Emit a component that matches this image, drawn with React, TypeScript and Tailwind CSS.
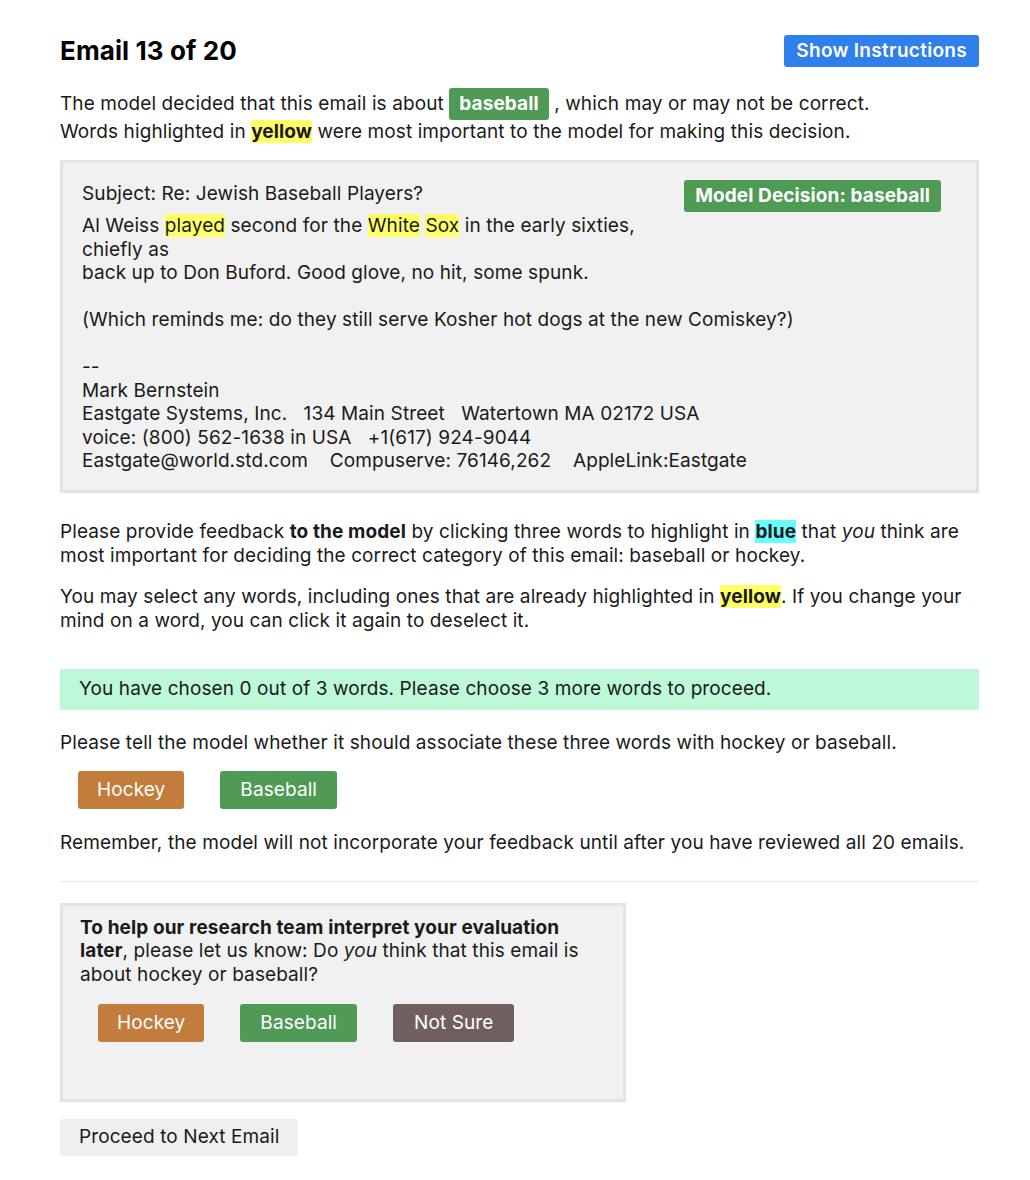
import { JSX } from "react";

const Hl = ({ children }: { children: string }): JSX.Element => (
  <span className="bg-[#ffff66]">{children}</span>
);

const ChoiceButton = ({ label, color, pad = "px-[19px]" }: { label: string; color: string; pad?: string }): JSX.Element => (
  <button className={`h-[38px] rounded-[3px] text-white text-[19px] ${pad} ${color}`}>{label}</button>
);

const App = (): JSX.Element => {
  return (
    <div className="font-['Inter',sans-serif] text-[19px] tracking-[0.1px] leading-[28px] text-[#1a1a1a] bg-white min-h-[1180px]">
      <div className="w-[919px] ml-[60px] pt-[35px] pb-6">
        <div className="flex items-center justify-between">
          <h1 className="text-[26px] font-bold text-black">Email 13 of 20</h1>
          <button className="h-[32px] px-[12px] rounded-[3px] bg-[#2f80ed] text-white font-semibold text-[19px] tracking-[0.3px]">
            Show Instructions
          </button>
        </div>

        <div className="mt-[23px]">
          <p>
            The model decided that this email is about{" "}
            <span className="inline-block bg-[#4f9a55] text-white font-bold px-[10px] leading-[32px] -my-[2px] rounded-[3px]">
              baseball
            </span>{" "}
            , which may or may not be correct.
          </p>
          <p>
            Words highlighted in <span className="bg-[#ffff66] font-bold">yellow</span> were most important to the
            model for making this decision.
          </p>
        </div>

        <div className="mt-[14px] bg-[#f1f1f1] border-[3px] border-[#e3e3e3] pl-[19px] pr-[35px] pt-[17px] pb-[17px] leading-[23.5px]">
          <div className="flex justify-between items-start">
            <p className="pt-[2px]">Subject: Re: Jewish Baseball Players?</p>
            <span className="bg-[#4f9a55] text-white font-bold px-[11px] leading-[32px] rounded-[3px]">
              Model Decision: baseball
            </span>
          </div>
          <div className="mt-[2px]">
            <p>
              Al Weiss <Hl>played</Hl> second for the <Hl>White</Hl> <Hl>Sox</Hl> in the early sixties,
            </p>
            <p>chiefly as</p>
            <p>back up to Don Buford. Good glove, no hit, some spunk.</p>
            <p>&nbsp;</p>
            <p>(Which reminds me: do they still serve Kosher hot dogs at the new Comiskey?)</p>
            <p>&nbsp;</p>
            <p>--</p>
            <p>Mark Bernstein</p>
            <p className="whitespace-pre">Eastgate Systems, Inc.   134 Main Street   Watertown MA 02172 USA</p>
            <p className="whitespace-pre">voice: (800) 562-1638 in USA   +1(617) 924-9044</p>
            <p className="whitespace-pre">Eastgate@world.std.com    Compuserve: 76146,262    AppleLink:Eastgate</p>
          </div>
        </div>

        <div className="mt-[27px] leading-[24px]">
          <p>
            Please provide feedback <b>to the model</b> by clicking three words to highlight in{" "}
            <span className="bg-[#66ffff] font-bold">blue</span> that <i>you</i> think are most important for deciding
            the correct category of this email: baseball or hockey.
          </p>
          <p className="mt-[17px]">
            You may select any words, including ones that are already highlighted in{" "}
            <span className="bg-[#ffff66] font-bold">yellow</span>. If you change your mind on a word, you can click it
            again to deselect it.
          </p>
        </div>

        <div className="mt-[36px] bg-[#bdf8d8] h-[41px] flex items-center px-[19px]">
          You have chosen 0 out of 3 words. Please choose 3 more words to proceed.
        </div>

        <p className="mt-[19px]">Please tell the model whether it should associate these three words with hockey or baseball.</p>

        <div className="flex gap-[36px] ml-[18px] mt-[14px]">
          <ChoiceButton label="Hockey" color="bg-[#c27c3c]" />
          <ChoiceButton label="Baseball" color="bg-[#4f9a55]" pad="px-[20px]" />
        </div>

        <p className="mt-[20px]">
          Remember, the model will not incorporate your feedback until after you have reviewed all 20 emails.
        </p>

        <hr className="mt-[24px] border-t border-[#e8e8e8]" />

        <div className="mt-[21px] w-[566px] h-[199px] bg-[#f1f1f1] border-[3px] border-[#e3e3e3] px-[17px] pt-[10px] leading-[23.5px]">
          <p>
            <b>To help our research team interpret your evaluation later</b>, please let us know: Do <i>you</i> think that
            this email is about hockey or baseball?
          </p>
          <div className="flex gap-[36px] ml-[18px] mt-[18px]">
            <ChoiceButton label="Hockey" color="bg-[#c27c3c]" />
            <ChoiceButton label="Baseball" color="bg-[#4f9a55]" pad="px-[20px]" />
            <ChoiceButton label="Not Sure" color="bg-[#6f605f]" pad="px-[21px]" />
          </div>
        </div>

        <button className="mt-[17px] h-[37px] px-[19px] rounded-[3px] bg-[#efefef] text-[19px] text-[#1a1a1a]">
          Proceed to Next Email
        </button>
      </div>
    </div>
  );
};

export default App;
